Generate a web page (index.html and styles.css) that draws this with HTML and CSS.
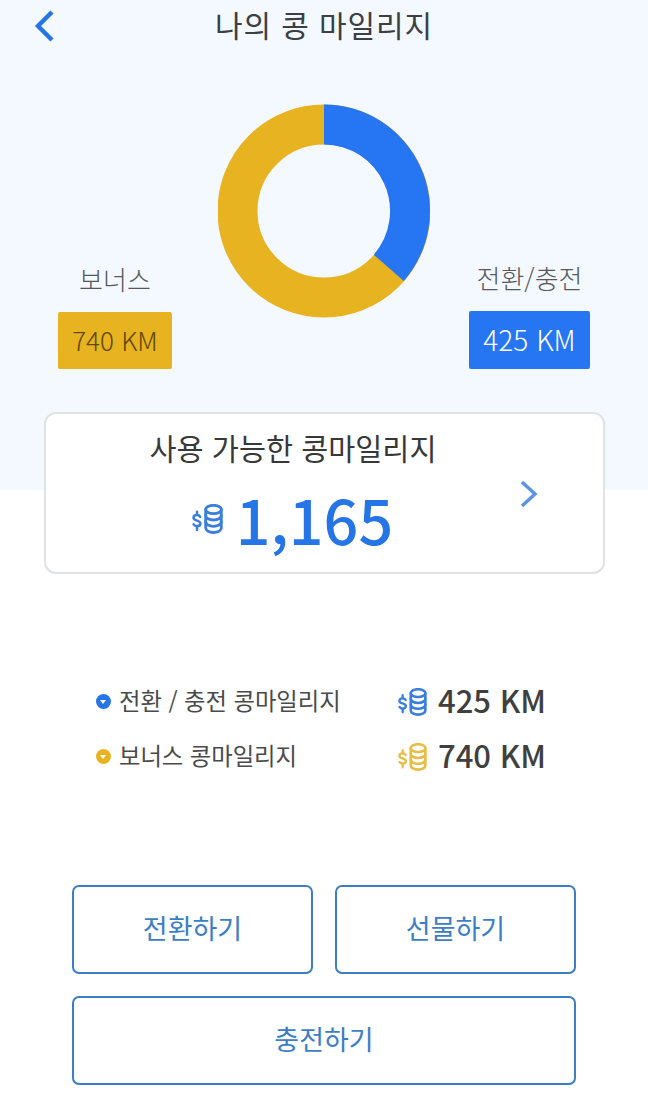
FILE: index.html
```html
<!DOCTYPE html>
<html lang="ko">
<head>
    <meta charset="UTF-8">
    <meta name="viewport" content="width=device-width, initial-scale=1.0">
    <title>나의 콩 마일리지</title>
    <link rel="stylesheet" href="styles.css">
</head>
<body>
    <svg class="sprite" width="0" height="0">
        <symbol id="coins" viewBox="0 0 32 30">
            <g fill="none" stroke="currentColor" stroke-width="2.8" stroke-linecap="round" stroke-linejoin="round">
                <ellipse cx="22.5" cy="5.5" rx="7.8" ry="4.2"/>
                <path d="M14.7 5.500v18.500c0 2.600 3.500 4.500 7.800 4.500s7.800-1.900 7.800-4.500V5.500"/>
                <path d="M14.700 11.500c0 2.600 3.500 4.500 7.800 4.500s7.800-1.900 7.800-4.500"/>
                <path d="M14.700 17.800c0 2.600 3.500 4.500 7.800 4.500s7.800-1.900 7.800-4.500"/>
                <path d="M9.200 12.800c-.6-1.100-1.700-1.700-3.200-1.700-2 0-3.500 1-3.500 2.700 0 3.600 6.900 2 6.900 5.600 0 1.700-1.500 2.700-3.400 2.700-1.500 0-2.700-.6-3.400-1.800" stroke-width="2.500"/>
                <path d="M6 7.800v3M6 22.500v3.500" stroke-width="2.500"/>
            </g>
        </symbol>
    </svg>

    <header class="topbar">
        <a class="back" href="#" aria-label="뒤로">
            <svg width="24" height="32" viewBox="0 0 24 32"><path d="M20 2 6 16l14 14" fill="none" stroke="#2675e6" stroke-width="4.400"/></svg>
        </a>
        <h1>나의 콩 마일리지</h1>
    </header>

    <section class="chart-row">
        <div class="legend legend-bonus">
            <p>보너스</p>
            <div class="tag tag-yellow">740 KM</div>
        </div>
        <svg class="donut" width="212" height="214" viewBox="0 0 212 214">
            <ellipse cx="106" cy="107" rx="86.5" ry="86.5" fill="none" stroke="#e8b321" stroke-width="40"/>
            <path d="M106 0.5A106 106.500 0 0 1 185.800 177.100L155.800 150.700A66 66.500 0 0 0 106 40.500Z" fill="#2675f2"/>
        </svg>
        <div class="legend legend-convert">
            <p>전환/충전</p>
            <div class="tag tag-blue">425 KM</div>
        </div>
    </section>

    <section class="total-card">
        <div class="total-main">
            <h2>사용 가능한 콩마일리지</h2>
            <div class="total-value">
                <svg class="coin-icon coin-big"><use href="#coins"/></svg>
                <span>1,165</span>
            </div>
        </div>
        <svg class="chevron" width="18" height="28" viewBox="0 0 18 28"><path d="M2 2l13 12L2 26" fill="none" stroke="#5a95e2" stroke-width="3.4"/></svg>
    </section>

    <ul class="breakdown">
        <li>
            <i class="dot dot-blue"></i>
            <span class="name">전환 / 충전 콩마일리지</span>
            <svg class="coin-icon coin-blue"><use href="#coins"/></svg>
            <span class="km">425 KM</span>
        </li>
        <li>
            <i class="dot dot-yellow"></i>
            <span class="name">보너스 콩마일리지</span>
            <svg class="coin-icon coin-yellow"><use href="#coins"/></svg>
            <span class="km">740 KM</span>
        </li>
    </ul>

    <div class="actions">
        <button>전환하기</button>
        <button>선물하기</button>
        <button class="wide">충전하기</button>
    </div>
</body>
</html>
```

FILE: styles.css
```css
html, body {
    height: 100%;
}

body {
    margin: 0;
    overflow: hidden;
    font-family: 'Noto Sans CJK KR', 'Noto Sans', sans-serif;
    background: linear-gradient(to bottom, #f3f9fe 490px, #ffffff 490px);
    color: #3f3f3f;
}

.sprite {
    position: absolute;
}

.topbar {
    display: flex;
    justify-content: center;
    align-items: center;
    height: 52px;
    padding-bottom: 4px;
    box-sizing: border-box;
    position: relative;
}

.topbar h1 {
    margin: 0;
    font-size: 30px;
    font-weight: 400;
    letter-spacing: 0.9px;
    color: #3c3f44;
}

.back {
    position: absolute; /* sits over the centered title row */
    left: 32px;
    top: 10px;
}

.chart-row {
    display: flex;
    align-items: flex-end;
    height: 317px;
    padding-left: 58px;
}

.donut {
    margin: 0 39px 51px 46px;
    flex: none;
}

.legend {
    display: flex;
    flex-direction: column;
    align-items: center;
}

.legend p {
    margin: 0 0 15px;
    font-size: 26px;
    font-weight: 300;
    line-height: 36px;
    color: #55585c;
}

.tag {
    display: flex;
    align-items: center;
    justify-content: center;
    box-sizing: border-box;
    padding-bottom: 3px;
    border-radius: 2px;
    font-weight: 300;
}

.tag-yellow {
    width: 114px;
    height: 57px;
    background-color: #e8b321;
    color: #5f4700;
    font-size: 26px;
}

.tag-blue {
    width: 121px;
    height: 58px;
    background-color: #2675f2;
    color: #ffffff;
    font-size: 28px;
}

.total-card {
    display: flex;
    align-items: center;
    box-sizing: border-box;
    width: 561px;
    height: 162px;
    margin: 43px 0 0 44px;
    padding-left: 20px;
    background-color: #ffffff;
    border: 2px solid #e0e2e5;
    border-radius: 12px;
}

.total-main {
    flex: 1;
    display: flex;
    flex-direction: column;
    align-items: center;
}

.total-main h2 {
    margin: 0 0 9px;
    font-size: 29.400px;
    font-weight: 400;
    line-height: 42px;
    color: #383838;
}

.total-value {
    display: flex;
    align-items: center;
    gap: 13px;
    margin-right: 2px;
    font-size: 61px;
    font-weight: 500;
    line-height: 84px;
    color: #2675e6;
}

.chevron {
    margin: 2px 65px 0 0;
    flex: none;
}

.coin-icon {
    width: 30px;
    height: 28px;
    flex: none;
}

.coin-big {
    width: 32px;
    height: 30px;
    margin-top: 0;
    color: #3b7fdc;
}

.coin-blue {
    color: #3b7fdc;
}

.coin-yellow {
    color: #e8bd45;
}

.breakdown {
    list-style: none;
    margin: 100px 0 0;
    padding: 0 0 0 96px;
}

.breakdown li {
    display: flex;
    align-items: center;
    height: 55px;
}

.dot {
    position: relative;
    width: 15px;
    height: 15px;
    border-radius: 50%;
    margin-right: 8px;
    flex: none;
}

.dot::after {
    content: "";
    position: absolute;
    left: 4px;
    top: 6px;
    border-left: 3.5px solid transparent;
    border-right: 3.5px solid transparent;
    border-top: 4px solid #ffffff;
}

.dot-blue {
    background-color: #2675e6;
}

.dot-yellow {
    background-color: #e8b321;
}

.name {
    width: 278px;
    padding-bottom: 3px;
    font-size: 23.300px;
    font-weight: 400;
    color: #4a4a4a;
}

.km {
    margin-left: 11px;
    padding-bottom: 5px;
    font-size: 31px;
    font-weight: 500;
    color: #3f3f3f;
}

.actions {
    display: grid;
    grid-template-columns: 241px 241px;
    gap: 22px;
    margin: 101px 0 0 72px;
}

.actions button {
    height: 89px;
    padding: 0 0 4px;
    background-color: #ffffff;
    border: 2px solid #3d7dc6;
    border-radius: 7px;
    font-family: inherit;
    font-size: 27px;
    color: #3d7dc6;
}

.actions .wide {
    grid-column: 1 / 3;
}
```
